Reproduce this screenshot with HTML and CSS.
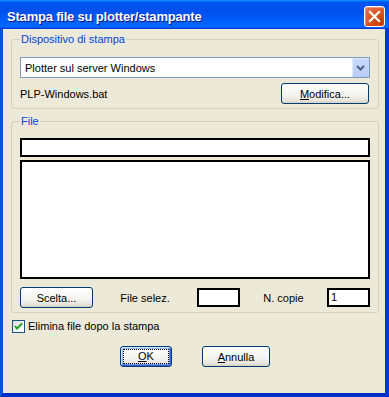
FILE: index.html
```html
<!DOCTYPE html>
<html lang="it">
<head>
    <meta charset="UTF-8">
    <title>Stampa file su plotter/stampante</title>
    <link rel="stylesheet" href="styles.css">
</head>
<body>
    <div class="window">
        <div class="titlebar">
            <span class="title">Stampa file su plotter/stampante</span>
            <button class="close" type="button">
                <svg width="13" height="13" viewBox="0 0 13 13">
                    <path d="M2 2 L11 11 M11 2 L2 11" stroke="#fff" stroke-width="2.2" stroke-linecap="square"/>
                </svg>
            </button>
        </div>
        <div class="frame">
            <fieldset class="group group-device">
                <legend>Dispositivo di stampa</legend>
                <div class="combo">
                    <span class="combo-value">Plotter sul server Windows</span>
                    <span class="combo-arrow">
                        <svg width="9" height="6" viewBox="0 0 9 6">
                            <path d="M1 1 L4.5 4.5 L8 1" fill="none" stroke="#4D6185" stroke-width="2"/>
                        </svg>
                    </span>
                </div>
                <div class="device-row">
                    <span>PLP-Windows.bat</span>
                    <button class="btn btn-modify" type="button"><u>M</u>odifica...</button>
                </div>
            </fieldset>

            <fieldset class="group group-file">
                <legend>File</legend>
                <div class="field field-path"></div>
                <div class="listbox"></div>
                <div class="file-row">
                    <button class="btn btn-choose" type="button">Scelta...</button>
                    <span class="label">File selez.</span>
                    <div class="field field-small"></div>
                    <span class="label">N. copie</span>
                    <div class="field field-small">1</div>
                </div>
            </fieldset>

            <label class="check-row">
                <span class="checkbox">
                    <svg width="11" height="11" viewBox="0 0 11 11">
                        <path d="M2 5 L4 7.5 L9 2.5" fill="none" stroke="#21A121" stroke-width="2"/>
                    </svg>
                </span>
                Elimina file dopo la stampa
            </label>

            <div class="actions">
                <button class="btn btn-ok" type="button"><span class="focus"><u>O</u>K</span></button>
                <button class="btn btn-cancel" type="button"><u>A</u>nnulla</button>
            </div>
        </div>
    </div>
</body>
</html>
```

FILE: styles.css
```css
body {
    margin: 0;
    font-family: "Liberation Sans", Arial, sans-serif;
    font-size: 11px;
    color: #000;
    background: #fff;
}
.window {
    width: 389px;
    height: 397px;
    display: flex;
    flex-direction: column;
}
.titlebar {
    height: 29px;
    box-sizing: border-box;
    flex: none;
    display: flex;
    align-items: flex-start;
    justify-content: space-between;
    padding: 6px 4px 0 7px;
    background: linear-gradient(180deg, #0997ff, #0053ee 8%, #0050ee 40%, #0066ff 88%, #0066ff 93%, #005bff 95%, #003dd7 96%, #003dd7);
}
.title {
    color: #fff;
    font-weight: bold;
    font-size: 13px;
    letter-spacing: -0.2px;
    line-height: 21px;
    text-shadow: 1px 1px #0f1089;
}
.close {
    width: 21px;
    height: 21px;
    padding: 0;
    display: flex;
    align-items: center;
    justify-content: center;
    border: 1px solid #fff;
    border-radius: 3px;
    background: radial-gradient(circle at 85% 85%, #c43c00 0, #dc5a22 55%, #e07b5c 100%);
    box-shadow: inset 0 -1px 1px #da4600, inset 1px 1px #eb9a7b;
}
.frame {
    flex: 1;
    display: flex;
    flex-direction: column;
    padding: 4px 6px 0 8px;
    background: #ece9d8;
    border-style: solid;
    border-width: 0 4px 4px 3px;
    border-color: #0040d8 #0038d0 #0030c8 #0855dd;
}
.group {
    margin: 0;
    padding: 0 8px 4px;
    min-width: 0;
    border: 1px solid #d0d0bf;
    border-radius: 3px;
}
.group legend {
    padding: 0 1px;
    line-height: 13px;
    color: #0046d5;
}
.group-device {
    padding-top: 11px;
}
.group-file {
    margin-top: 6px;
    padding-top: 10px;
}
.combo {
    height: 21px;
    box-sizing: border-box;
    display: flex;
    align-items: center;
    justify-content: space-between;
    border: 1px solid #7f9db9;
    background: #fff;
    padding: 0 0 0 4px;
}
.combo-arrow {
    width: 17px;
    height: 19px;
    display: flex;
    align-items: center;
    justify-content: center;
    border-radius: 1px;
    background: linear-gradient(180deg, #c9dafc, #b8cdf9);
    box-shadow: inset 1px 1px #e1eafe;
}
.device-row {
    margin-top: 5px;
    display: flex;
    align-items: center;
    justify-content: space-between;
}
.btn {
    box-sizing: border-box;
    height: 21px;
    padding: 0;
    font: inherit;
    color: #000;
    border: 1px solid #003c74;
    border-radius: 3px;
    background: linear-gradient(180deg, #ffffff, #f3f3ef 60%, #e6e3da 88%, #d6d0c5);
}
.btn-modify {
    width: 88px;
    margin-right: 1px;
}
.field {
    box-sizing: border-box;
    height: 19px;
    border: 2px solid #000;
    background: #fff;
    padding: 0 2px;
    line-height: 15px;
}
.listbox {
    box-sizing: border-box;
    height: 119px;
    margin-top: 3px;
    border: 2px solid #000;
    background: #fff;
}
.file-row {
    margin-top: 8px;
    display: grid;
    grid-template-columns: 73px 104px 43px 1fr 43px;
    align-items: center;
}
.file-row .label {
    text-align: center;
}
.btn-choose {
    width: 73px;
}
.check-row {
    margin: 7px 0 0 1px;
    display: flex;
    align-items: center;
    gap: 3px;
    line-height: 13px;
}
.checkbox {
    box-sizing: border-box;
    width: 13px;
    height: 13px;
    display: flex;
    align-items: center;
    justify-content: center;
    border: 1px solid #1c5180;
    background: linear-gradient(135deg, #dcdcd7, #ffffff);
}
.actions {
    margin-top: 13px;
    display: flex;
    justify-content: center;
    gap: 30px;
}
.btn-ok {
    width: 52px;
    padding: 2px;
    box-shadow: inset -1px -1px #3d5fd4, inset 1px 1px #cee7ff, inset -2px -2px #6a8cf0, inset 2px 2px #98b8ea;
}
.btn-ok .focus {
    display: block;
    height: 100%;
    box-sizing: border-box;
    border: 1px dotted #000;
    line-height: 13px;
}
.btn-cancel {
    width: 68px;
}
```
